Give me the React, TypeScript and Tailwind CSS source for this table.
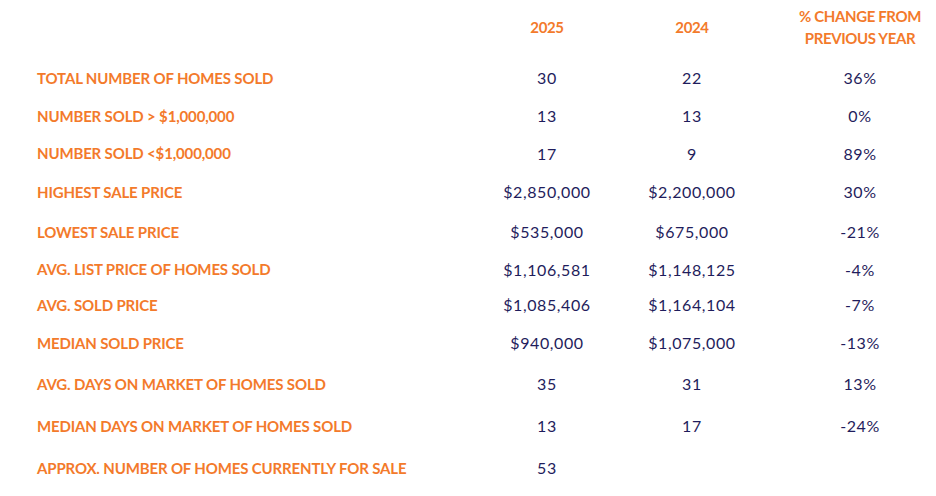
import React from "react";

const rows: { label: string; a: string; b: string; c: string; h: string }[] = [
  { label: "TOTAL NUMBER OF HOMES SOLD", a: "30", b: "22", c: "36%", h: "h-[38px]" },
  { label: "NUMBER SOLD > $1,000,000", a: "13", b: "13", c: "0%", h: "h-[38px]" },
  { label: "NUMBER SOLD <$1,000,000", a: "17", b: "9", c: "89%", h: "h-[37px]" },
  { label: "HIGHEST SALE PRICE", a: "$2,850,000", b: "$2,200,000", c: "30%", h: "h-[40px]" },
  { label: "LOWEST SALE PRICE", a: "$535,000", b: "$675,000", c: "-21%", h: "h-[40px]" },
  { label: "AVG. LIST PRICE OF HOMES SOLD", a: "$1,106,581", b: "$1,148,125", c: "-4%", h: "h-[35px]" },
  { label: "AVG. SOLD PRICE", a: "$1,085,406", b: "$1,164,104", c: "-7%", h: "h-[36px]" },
  { label: "MEDIAN SOLD PRICE", a: "$940,000", b: "$1,075,000", c: "-13%", h: "h-[40px]" },
  { label: "AVG. DAYS ON MARKET OF HOMES SOLD", a: "35", b: "31", c: "13%", h: "h-[42px]" },
  { label: "MEDIAN DAYS ON MARKET OF HOMES SOLD", a: "13", b: "17", c: "-24%", h: "h-[42px]" },
  { label: "APPROX. NUMBER OF HOMES CURRENTLY FOR SALE", a: "53", b: "", c: "", h: "h-[42px]" },
];

export default function App() {
  return (
    <div className="w-[936px] h-[496px] bg-white overflow-hidden pl-[37px] font-['Lato',sans-serif]">
      <div className="flex h-[59px] items-start text-[#f37a2b] font-bold text-[15px] leading-[22px]">
        <div className="w-[440px]" />
        <div className="w-[140px] text-center pt-[16px] tracking-tight">2025</div>
        <div className="w-[150px] text-center pt-[16px] tracking-tight">2024</div>
        <div className="w-[163px] pl-[23px] pt-[5px] text-center tracking-tight">
          <div>% CHANGE FROM</div>
          <div>PREVIOUS YEAR</div>
        </div>
      </div>
      {rows.map((r) => (
        <div key={r.label} className={`flex items-center ${r.h}`}>
          <div className="w-[440px] text-[#f37a2b] font-bold text-[15px] tracking-[-0.15px]">{r.label}</div>
          <div className="w-[140px] text-center text-[#1f1d5c] text-[16px] tracking-[0.6px]">{r.a}</div>
          <div className="w-[150px] text-center text-[#1f1d5c] text-[16px] tracking-[0.6px]">{r.b}</div>
          <div className="w-[163px] pl-[23px] text-center text-[#1f1d5c] text-[16px] tracking-[0.6px]">{r.c}</div>
        </div>
      ))}
    </div>
  );
}
